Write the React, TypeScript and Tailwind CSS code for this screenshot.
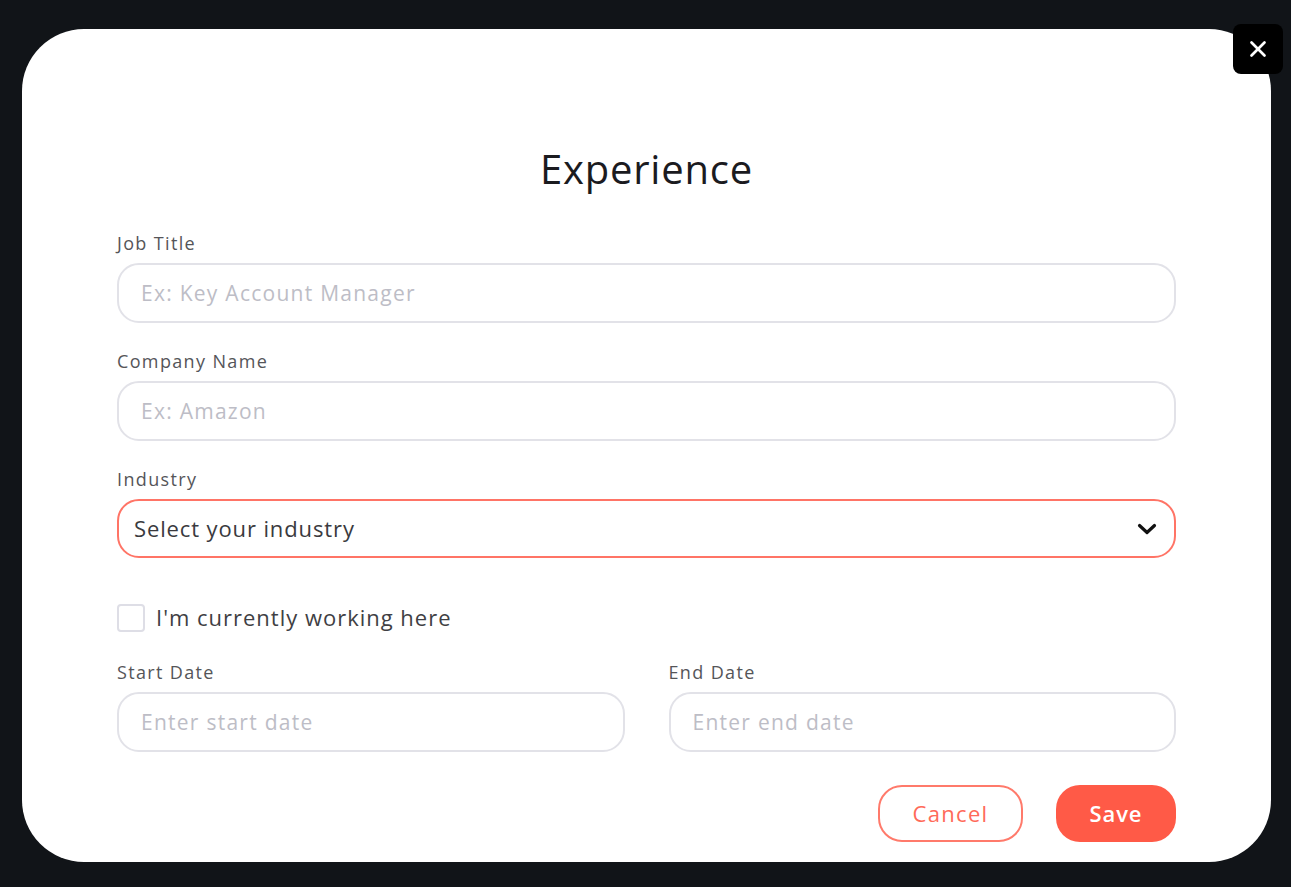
import { X } from "lucide-react";

const font = { fontFamily: '"Open Sans", "Noto Sans", sans-serif' };

interface FieldProps {
  label: string;
  placeholder: string;
}

const Label = ({ children }: { children: string }) => (
  <label className="text-[18px] leading-[24px] text-[#555559] tracking-[0.075em]">{children}</label>
);

const Field = ({ label, placeholder }: FieldProps) => (
  <div className="flex flex-col">
    <Label>{label}</Label>
    <input
      className="mt-[8px] h-[60px] w-full rounded-[22px] border-2 border-[#e2e2e8] px-[22px] text-[21px] tracking-[0.06em] outline-none placeholder:text-[#bdbdc6]"
      placeholder={placeholder}
      style={font}
    />
  </div>
);

export default function App() {
  return (
    <div className="min-h-screen bg-[#111418] pl-[22px] pr-[20px] pt-[29px] pb-[25px]" style={font}>
      <div className="relative h-[833px] w-[1249px] rounded-[62px] bg-white px-[95px] pt-[116px]">
        <button className="absolute -right-[12px] -top-[5px] flex h-[50px] w-[50px] items-center justify-center rounded-[8px] bg-black">
          <X className="h-[26px] w-[26px] text-white" strokeWidth={2.5} />
        </button>

        <h1 className="text-center text-[40px] leading-[48px] text-[#1b1b1f] tracking-[0.02em]">Experience</h1>

        <div className="mt-[38px] flex flex-col gap-[26px]">
          <Field label="Job Title" placeholder="Ex: Key Account Manager" />
          <Field label="Company Name" placeholder="Ex: Amazon" />
          <div className="flex flex-col">
            <Label>Industry</Label>
            <div className="mt-[8px] flex h-[59px] items-center justify-between rounded-[22px] border-2 border-[#ff7466] pl-[15px] pr-[17px]">
              <span className="text-[22px] text-[#3a3a3e] tracking-[0.04em]">Select your industry</span>
              <svg width="20" height="12" viewBox="0 0 20 12" fill="none">
                <path d="M2.5 2.5 L10 9.5 L17.5 2.5" stroke="#111" strokeWidth="3.2" strokeLinecap="round" strokeLinejoin="round" />
              </svg>
            </div>
          </div>
        </div>

        <div className="mt-[43px] flex items-center gap-[11px]">
          <div className="h-[28px] w-[28px] rounded-[4px] border-2 border-[#dedee6]" />
          <span className="text-[22px] text-[#3f3f44] tracking-[0.045em]">I'm currently working here</span>
        </div>

        <div className="mt-[26px] grid grid-cols-2 gap-[44px]">
          <Field label="Start Date" placeholder="Enter start date" />
          <Field label="End Date" placeholder="Enter end date" />
        </div>

        <div className="mt-[33px] flex justify-end gap-[33px]">
          <button className="h-[57px] w-[145px] rounded-[24px] border-2 border-[#ff7a6b] text-[22px] tracking-[0.06em] text-[#ff6a59]">
            Cancel
          </button>
          <button className="h-[57px] w-[120px] rounded-[24px] bg-[#ff5a47] text-[22px] font-semibold tracking-[0.04em] text-white">
            Save
          </button>
        </div>
      </div>
    </div>
  );
}
